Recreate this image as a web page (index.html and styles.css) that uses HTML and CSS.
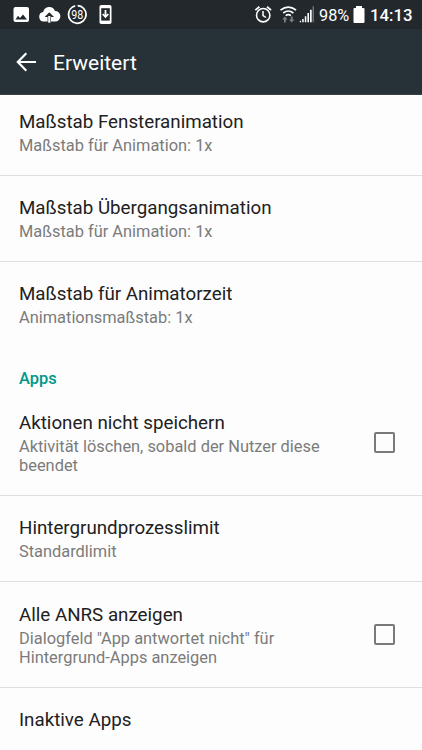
FILE: index.html
```html
<!DOCTYPE html>
<html lang="de">
<head>
<meta charset="utf-8">
<title>Erweitert</title>
<link rel="stylesheet" href="styles.css">
</head>
<body>
<div class="screen">
  <div class="status">
    <svg class="notifications" width="130" height="29" viewBox="0 0 130 29">
      <path fill="#fff" fill-rule="evenodd" d="M15.500 7h11.500q2 0 2 2v11q0 2-2 2H15.500q-2 0-2-2V9q0-2 2-2zM15.500 19.500h11.500l-4-5-3 3.600-2-2.300z"/>
      <path fill="#fff" fill-rule="evenodd" d="M43.500 21.500a4.800 4.800 0 0 1-.3-9.500 6.200 6.200 0 0 1 11.800-1.100 5.200 5.200 0 0 1 .2 10.600H51V17h3l-4.700-4.800L44.600 17h3v4.500z"/>
      <path fill="#fff" d="M48.200 16h2.200v6.700h-2.200z"/>
      <circle cx="77.300" cy="14.500" r="8.800" fill="none" stroke="#fff" stroke-width="1.800" stroke-dasharray="52.500 2.800" transform="rotate(-88 77.300 14.500)"/>
      <text class="level" x="77.300" y="19" text-anchor="middle" textLength="12" lengthAdjust="spacingAndGlyphs">98</text>
      <rect x="99.500" y="5" width="12" height="19" rx="1.800" fill="#fff"/>
      <path fill="#22282c" d="M101.200 8.200h8.600v12.400h-8.600z"/>
      <path fill="none" stroke="#fff" stroke-width="1.800" d="M105.500 10v7M102.700 14l2.800 3 2.800-3"/>
    </svg>
    <div class="indicators">
      <svg width="69" height="29" viewBox="0 0 69 29">
        <g fill="none" stroke="#fff">
          <circle cx="13.200" cy="15.200" r="6.700" stroke-width="1.600"/>
          <path stroke-width="1.500" d="M13 11v4.500l3 2"/>
          <path stroke-width="1.800" d="M5.300 10.100 9.400 6.700M17 6.700l4.100 3.400"/>
          <path stroke-width="1.700" d="M30.500 10.200q7.800-6.200 15.600 0M33.200 13q5.100-4 10.200 0M35.700 15.600q2.600-2 5.200 0"/>
        </g>
        <path fill="#7b8083" d="M32.200 19.400l2.700-3 2.700 3h-1.800v3h-1.800v-3zM39 19.400h1.800v-3h1.800v3h1.800l-2.700 3z"/>
        <path fill="#fff" d="M49.800 20.800h1.300v1.500h-1.300zM52.200 19h1.500v3.300h-1.500zM54.800 16.300h1.500v6h-1.500zM57.400 13h1.600v9.300h-1.600zM60 9.800h1.700v12.500H60z"/>
        <path fill="#6b7175" d="M62.500 6.300h1.500v16h-1.500z"/>
      </svg>
      <span class="percent">98%</span>
      <svg class="battery" width="12" height="29" viewBox="0 0 12 29"><path fill="#fff" d="M3 6h6v2h1.500q1 0 1 1v13q0 1-1 1h-9q-1 0-1-1V9q0-1 1-1H3z"/></svg>
      <span class="clock">14:13</span>
    </div>
  </div>
  <header class="appbar">
    <svg width="20" height="20" viewBox="0 0 20 20"><path fill="none" stroke="#fff" stroke-width="2.200" d="M20 10H2M10.300 1.200 1.800 10l8.500 8.800"/></svg>
    <h1 class="heading">Erweitert</h1>
  </header>
  <main class="list">
    <div class="row first"><div class="copy"><div class="title">Maßstab Fensteranimation</div><div class="summary">Maßstab für Animation: 1x</div></div></div>
    <div class="row"><div class="copy"><div class="title">Maßstab Übergangsanimation</div><div class="summary">Maßstab für Animation: 1x</div></div></div>
    <div class="row last"><div class="copy"><div class="title">Maßstab für Animatorzeit</div><div class="summary">Animationsmaßstab: 1x</div></div></div>
    <h2 class="section">Apps</h2>
    <div class="row lead"><div class="copy"><div class="title">Aktionen nicht speichern</div><div class="summary">Aktivität löschen, sobald der Nutzer diese<br>beendet</div></div><span class="check"></span></div>
    <div class="row"><div class="copy"><div class="title">Hintergrundprozesslimit</div><div class="summary">Standardlimit</div></div></div>
    <div class="row tall"><div class="copy"><div class="title">Alle ANRS anzeigen</div><div class="summary">Dialogfeld "App antwortet nicht" für<br>Hintergrund-Apps anzeigen</div></div><span class="check"></span></div>
    <div class="row last"><div class="copy"><div class="title">Inaktive Apps</div></div></div>
  </main>
</div>
</body>
</html>
```
FILE: styles.css
```css
* { box-sizing: border-box; }
body { margin: 0; font-family: Roboto, "Liberation Sans", sans-serif; }
.screen { width: 422px; height: 750px; overflow: hidden; background: #fdfdfd; display: flex; flex-direction: column; }
.status { flex: none; height: 29px; background: #22282c; color: #fff; display: flex; justify-content: space-between; }
.status svg { display: block; flex: none; }
.level { font-size: 12.5px; fill: #fff; }
.indicators { display: flex; align-items: center; height: 29px; width: 172px; }
.percent { width: 34px; font-size: 16.3px; line-height: 29px; padding-top: 2px; white-space: nowrap; }
.clock { margin-left: 5px; font-size: 16.8px; font-weight: 500; line-height: 29px; padding-top: 2px; }
.appbar { flex: none; height: 66px; background: #263238; color: #fff; display: flex; align-items: center; padding-left: 16px; border-bottom: 1px solid #36444a; }
.heading { margin: 2px 0 0 17px; font-size: 21px; font-weight: 400; line-height: 28px; }
.list { flex: none; }
.row { height: 86px; padding: 20px 27px 0 19px; display: flex; justify-content: space-between; border-bottom: 1px solid #dedede; }
.title { font-size: 18.76px; line-height: 24px; color: #212121; white-space: nowrap; }
.summary { margin-top: 2px; font-size: 16.4px; line-height: 19.3px; color: #7b7b7b; white-space: nowrap; }
.first { height: 81px; padding-top: 15px; }
.last { border-bottom-color: transparent; }
.section { margin: 0; height: 43px; padding: 20px 0 0 19px; font-size: 16.4px; font-weight: 500; line-height: 22px; color: #009688; }
.lead { height: 105px; }
.tall { height: 106px; padding-top: 21px; }
.check { width: 21px; height: 21px; margin-top: 21px; border: 2px solid #7a7a7a; border-radius: 2px; }
```
